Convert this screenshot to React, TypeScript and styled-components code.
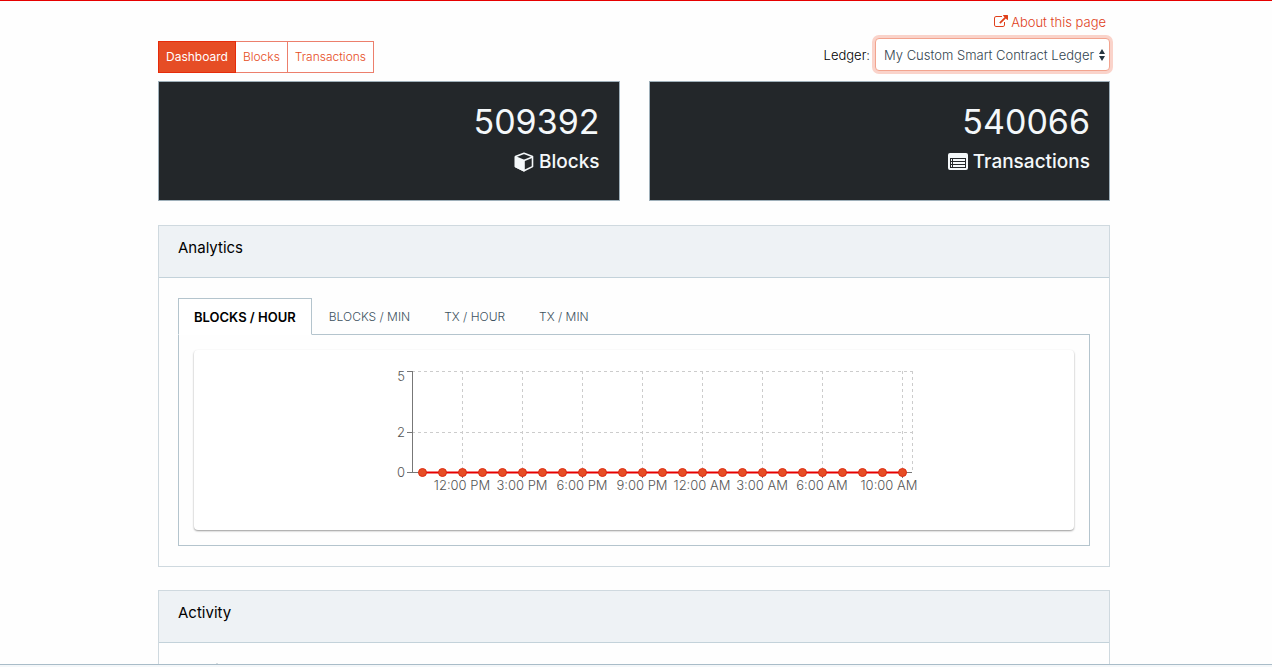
import React, { useState } from "react";
import styled, { createGlobalStyle } from "styled-components";

const GlobalStyle = createGlobalStyle`
  *, *::before, *::after { box-sizing: border-box; }
  body {
    margin: 0;
    background: #fefefe;
    color: #000;
    font: 300 13px/20px Inter, "Liberation Sans", sans-serif;
  }
  h2, p { margin: 0; }
  button, select { font: inherit; }
`;

const Shell = styled.div`
  display: flex;
  flex-direction: column;
  height: 100vh;
  border-top: 1px solid #e60000;
`;

const Main = styled.main`
  flex: 1;
  min-height: 0;
  overflow: hidden;
  padding-right: 4px;
`;

const Container = styled.div`
  width: calc(75% + 1px);
  max-width: 1140px;
  margin: 0 auto;
  padding-top: 11px;
`;

const Footer = styled.footer`
  height: 3px;
  flex: none;
  background: #f4f7f9;
  border-top: 1px solid #a9bcc8;
`;

const TopRow = styled.header`
  display: flex;
  justify-content: space-between;
  align-items: flex-end;
  height: 61px;
  margin-bottom: 8px;
`;

const PageNav = styled.nav`
  display: flex;
`;

const NavLink = styled.a<{ $active?: boolean }>`
  display: block;
  height: 32px;
  padding: 5px 7px;
  border: 1px solid ${(p) => (p.$active ? "#e62b0a" : "#ec7f6c")};
  background: ${(p) => (p.$active ? "#e64d25" : "#fff")};
  color: ${(p) => (p.$active ? "#fff" : "#e64d25")};
  font-size: 12px;
  font-weight: ${(p) => (p.$active ? 400 : 300)};
  text-decoration: none;
  & + & { border-left-width: 0; }
`;

const Side = styled.div`
  display: flex;
  flex-direction: column;
  align-self: flex-start;
  align-items: flex-end;
  gap: 6px;
`;

const AboutLink = styled.a`
  display: flex;
  align-items: center;
  gap: 3px;
  margin-right: 4px;
  color: #e0401b;
  text-decoration: none;
`;

const LedgerField = styled.label`
  display: flex;
  align-items: center;
  gap: 5px;
`;

const SelectWrap = styled.span`
  position: relative;
  display: block;
  & > svg { position: absolute; right: 4px; top: 10px; pointer-events: none; }
`;

const LedgerSelect = styled.select`
  display: block;
  width: 235px;
  height: 33px;
  padding: 0 12px 0 8px;
  appearance: none;
  border: 1px solid #f2a48f;
  border-radius: 4px;
  outline: 0;
  background: #fff;
  color: #33454f;
  box-shadow: 0 0 0 3px #fad3ca;
`;

const Stats = styled.section`
  display: grid;
  grid-template-columns: 1fr 1fr;
  gap: 29px;
  margin-bottom: 24px;
`;

const StatCard = styled.article`
  display: flex;
  flex-direction: column;
  align-items: flex-end;
  height: 120px;
  padding: 20px 19px;
  border: 1px solid #9fb0ba;
  background: #23272a;
  color: #f4f8fa;
`;

const StatValue = styled.p`
  font-size: 34px;
  line-height: 40px;
  font-weight: 400;
`;

const StatLabel = styled.p`
  display: flex;
  align-items: center;
  gap: 5px;
  font-size: 19px;
  line-height: 40px;
  font-weight: 500;
`;

const Panel = styled.section`
  margin-bottom: 23px;
  border: 1px solid #cfd9df;
`;

const PanelTitle = styled.h2`
  height: 52px;
  padding: 12px 19px;
  border-bottom: 1px solid #c3d2da;
  background: #eef2f5;
  font-size: 15px;
  line-height: 20px;
  font-weight: 400;
`;

const PanelBody = styled.div`
  padding: 20px 19px;
`;

const TabList = styled.div`
  display: flex;
`;

const Tab = styled.button<{ $active: boolean }>`
  height: 37px;
  margin-bottom: -1px;
  padding: 0 ${(p) => (p.$active ? 15 : 16)}px;
  border: 1px solid ${(p) => (p.$active ? "#b4c4cd" : "transparent")};
  border-bottom-color: ${(p) => (p.$active ? "#fff" : "transparent")};
  background: ${(p) => (p.$active ? "#fff" : "transparent")};
  color: ${(p) => (p.$active ? "#000" : "#3d525e")};
  font-size: ${(p) => (p.$active ? 13 : 12)}px;
  font-weight: ${(p) => (p.$active ? 600 : 300)};
  cursor: pointer;
`;

const TabPanel = styled.div`
  padding: 15px;
  border: 1px solid #b4c4cd;
`;

const ChartCard = styled.div`
  display: flex;
  justify-content: center;
  height: 180px;
  padding-top: 15px;
  border-radius: 4px;
  background: #fff;
  box-shadow: 0 1px 2px rgba(0, 0, 0, 0.4);
`;

const Chart = styled.svg`
  display: block;
  flex: none;
  font-size: 13px;
  fill: #555;
`;

const ExternalLinkIcon = () => (
  <svg width="14" height="14" viewBox="0 0 1792 1792" fill="currentColor" aria-hidden="true">
    <path d="M1408 928v320q0 119-84.500 203.500T1120 1536H288q-119 0-203.500-84.500T0 1248V416q0-119 84.500-203.500T288 128h704q14 0 23 9t9 23v64q0 14-9 23t-23 9H288q-66 0-113 47t-47 113v832q0 66 47 113t113 47h832q66 0 113-47t47-113V928q0-14 9-23t23-9h64q14 0 23 9t9 23zm384-864v512q0 26-19 45t-45 19-45-19l-176-176-652 652q-10 10-23 10t-23-10L695 983q-10-10-10-23t10-23l652-652-176-176q-19-19-19-45t19-45 45-19h512q26 0 45 19t19 45z" />
  </svg>
);

const CubeIcon = () => (
  <svg width="20" height="20" viewBox="0 0 20 20" fill="none" stroke="currentColor" strokeWidth="1.600" strokeLinejoin="round" aria-hidden="true">
    <path d="M10 1.200 18.500 4.600V14.600L10 18.800 1.500 14.600V4.600Z" />
    <path d="M1.500 5 10 8.400V18.800L1.500 14.600Z" fill="currentColor" />
    <path d="M10 8.400 18.500 5" />
  </svg>
);

const ListIcon = () => (
  <svg width="20" height="20" viewBox="0 0 20 20" fill="currentColor" aria-hidden="true">
    <path fillRule="evenodd" d="M2 1h16a2 2 0 0 1 2 2v13a2 2 0 0 1-2 2H2a2 2 0 0 1-2-2V3a2 2 0 0 1 2-2zM2 6v10h16V6z" />
    <path d="M3 7h1v2H3zM3 10h1v2H3zM3 13h1v2H3zM5 7h12v2H5zM5 10h12v2H5zM5 13h12v2H5z" />
  </svg>
);

const UpDownIcon = () => (
  <svg width="8" height="14" viewBox="0 0 8 14" fill="#263640" aria-hidden="true">
    <path d="M4 1 7 6H1zM4 13 1 8h6z" />
  </svg>
);

const views = ["BLOCKS / HOUR", "BLOCKS / MIN", "TX / HOUR", "TX / MIN"];

const hours = Array.from({ length: 25 }, (_, i) => 42 + i * 20);

const timeTicks = [
  { x: 82, label: "12:00 PM" },
  { x: 142, label: "3:00 PM" },
  { x: 202, label: "6:00 PM" },
  { x: 262, label: "9:00 PM" },
  { x: 322, label: "12:00 AM" },
  { x: 382, label: "3:00 AM" },
  { x: 442, label: "6:00 AM" },
  { x: 522, label: "10:00 AM", textX: 509 },
];

const valueTicks = [
  { y: 6, label: "5", textY: 16 },
  { y: 67, label: "2", textY: 72 },
  { y: 107, label: "0", textY: 112 },
];

const BlocksChart = () => (
  <Chart width="580" height="140" viewBox="-36 0 580 140" role="img" aria-label="Blocks per hour">
    <g stroke="#ccc" strokeDasharray="3 3">
      <path d="M32 6.500H532M32 67.500H532M532.500 6V107" />
      {timeTicks.map((t) => (
        <path key={t.x} d={`M${t.x + 0.5} 6V107`} />
      ))}
    </g>
    <g stroke="#777">
      <path d="M32.500 6V107M32 107.500H532" />
      {valueTicks.map((t) => (
        <path key={t.label} d={`M27 ${t.y + 0.5}H32`} />
      ))}
      {timeTicks.map((t) => (
        <path key={t.x} d={`M${t.x + 0.5} 108v5`} />
      ))}
    </g>
    {valueTicks.map((t) => (
      <text key={t.label} x="25" y={t.textY} textAnchor="end">{t.label}</text>
    ))}
    {timeTicks.map((t) => (
      <text key={t.x} x={t.textX ?? t.x} y="125" textAnchor="middle">{t.label}</text>
    ))}
    <path d="M42 107.500H522" stroke="#e60000" strokeWidth="2" />
    {hours.map((x) => (
      <circle key={x} cx={x + 0.5} cy="107.500" r="4" fill="#e64d25" stroke="#dd2c10" />
    ))}
  </Chart>
);

const ActivityMark = styled.svg`
  display: block;
  margin-left: 33px;
`;

export default function App() {
  const [view, setView] = useState(views[0]);
  return (
    <>
      <GlobalStyle />
      <Shell>
        <Main>
          <Container>
            <TopRow>
              <PageNav>
                <NavLink href="#dashboard" $active>Dashboard</NavLink>
                <NavLink href="#blocks">Blocks</NavLink>
                <NavLink href="#transactions">Transactions</NavLink>
              </PageNav>
              <Side>
                <AboutLink href="#about"><ExternalLinkIcon />About this page</AboutLink>
                <LedgerField>
                  Ledger:
                  <SelectWrap>
                    <LedgerSelect>
                      <option>My Custom Smart Contract Ledger</option>
                    </LedgerSelect>
                    <UpDownIcon />
                  </SelectWrap>
                </LedgerField>
              </Side>
            </TopRow>
            <Stats>
              <StatCard>
                <StatValue>509392</StatValue>
                <StatLabel><CubeIcon />Blocks</StatLabel>
              </StatCard>
              <StatCard>
                <StatValue>540066</StatValue>
                <StatLabel><ListIcon />Transactions</StatLabel>
              </StatCard>
            </Stats>
            <Panel>
              <PanelTitle>Analytics</PanelTitle>
              <PanelBody>
                <TabList role="tablist">
                  {views.map((v) => (
                    <Tab key={v} role="tab" aria-selected={v === view} $active={v === view} onClick={() => setView(v)}>
                      {v}
                    </Tab>
                  ))}
                </TabList>
                <TabPanel role="tabpanel">
                  <ChartCard>
                    <BlocksChart />
                  </ChartCard>
                </TabPanel>
              </PanelBody>
            </Panel>
            <Panel>
              <PanelTitle>Activity</PanelTitle>
              <PanelBody>
                <ActivityMark width="12" height="12" viewBox="0 0 12 12" fill="#7d919d" aria-hidden="true">
                  <path d="M6 0 11 9H1z" />
                </ActivityMark>
              </PanelBody>
            </Panel>
          </Container>
        </Main>
        <Footer />
      </Shell>
    </>
  );
}
